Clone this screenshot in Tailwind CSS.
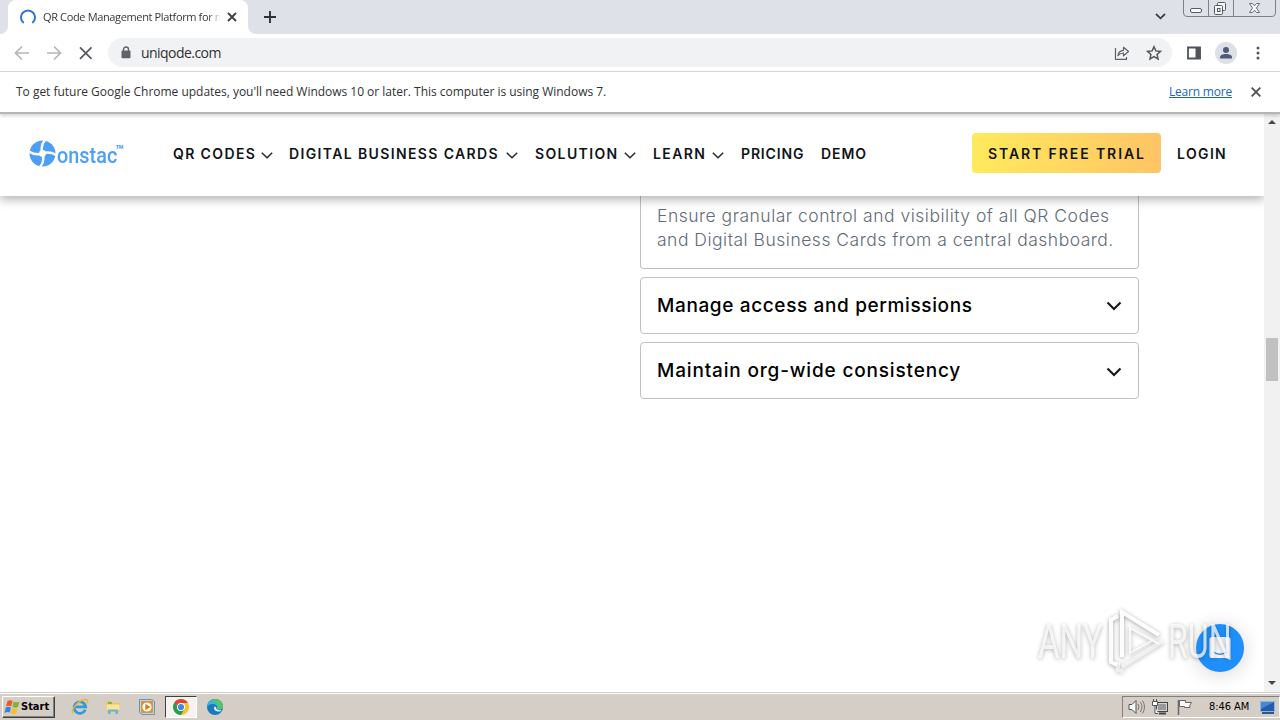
<!DOCTYPE html>
<html lang="en">
<head>
<meta charset="utf-8">
<title>QR Code Management Platform</title>
<script src="https://cdn.jsdelivr.net/npm/@tailwindcss/browser@4"></script>
</head>
<body class="w-[1280px] h-[720px] overflow-hidden flex flex-col bg-white font-['Open_Sans',sans-serif] text-[#303134]">
<!-- Tab strip -->
<div class="h-[34px] shrink-0 bg-[#dee1e8] flex items-start">
  <div class="w-2 h-[34px] bg-white shrink-0"><div class="size-full bg-[#dee1e8] rounded-br-lg"></div></div>
  <div class="w-[240px] h-[34px] bg-white rounded-t-lg flex items-center pl-3 shrink-0">
    <svg class="size-4 shrink-0" viewBox="0 0 16 16" fill="none"><path d="M3.700 14A7 7 0 1 1 12.300 14" stroke="#2f76d2" stroke-width="2"/></svg>
    <div class="ml-[7px] w-[178px] whitespace-nowrap text-[11px] tracking-[-0.36px] leading-4 bg-gradient-to-r from-[#303134] from-93% to-transparent bg-clip-text text-transparent">QR Code Management Platform for n</div>
    <svg class="size-[10px] ml-[6px] shrink-0" viewBox="0 0 10 10"><path d="M1 1l8 8M9 1L1 9" stroke="#3c4043" stroke-width="1.800"/></svg>
  </div>
  <div class="w-2 h-[34px] bg-white shrink-0"><div class="size-full bg-[#dee1e8] rounded-bl-lg"></div></div>
  <svg class="size-3 ml-2 mt-[11px]" viewBox="0 0 12 12"><path d="M6 0v12M0 6h12" stroke="#303134" stroke-width="1.900"/></svg>
  <svg class="w-[11px] h-[7px] ml-auto mt-[13px] mr-[17px]" viewBox="0 0 11 7" fill="none"><path d="M1 1l4.500 4.300L10 1" stroke="#3c4043" stroke-width="1.800"/></svg>
  <svg class="w-[93px] h-[17px] mr-1" viewBox="0 0 93 17" fill="none" stroke="#7d8087">
    <path d="M.5 0v13q0 3.500 3.500 3.500h85q3.500 0 3.500-3.500V0M25.500 0v16M50.500 0v16"/>
    <rect x="7.500" y="8.500" width="11" height="4" rx="1.500" fill="#f8f9fb" stroke="#5b5e65"/>
    <g fill="#f4f5f7" stroke="#565960"><rect x="34.500" y="2.500" width="8" height="8" rx="1"/><rect x="31.500" y="5.500" width="8" height="9" rx="1"/><rect x="34.500" y="8.500" width="2.500" height="3"/></g>
    <path d="M66.500 3.500h3l2 2.300 2-2.300h3l-3 4.500 3 4.500h-3l-2-2.300-2 2.300h-3l3-4.500z" fill="#f6f7f9" stroke="#6b6e75"/>
  </svg>
</div>
<!-- Toolbar -->
<div class="h-[38px] shrink-0 bg-white border-b border-[#d4d6da] flex items-center pl-[14px]">
  <svg class="w-[80px] h-4 shrink-0" viewBox="0 0 80 16" fill="none" stroke-width="1.700"><path d="M15 8H2M8 1.500L1.500 8 8 14.500M33 8h13M40 1.500L46.500 8 40 14.500" stroke="#b5b7ba"/><path d="M66 2.300l11.500 11.500M77.500 2.300L66 13.800" stroke="#55585c"/></svg>
  <div class="ml-[14px] w-[1064px] h-[29px] rounded-full bg-[#f0f2f4] flex items-center shrink-0">
    <svg class="w-[10px] h-[13px] ml-[13px]" viewBox="0 0 10 13"><path d="M2.500 6V3.500a2.500 2.500 0 0 1 5 0V6" fill="none" stroke="#5f6368" stroke-width="1.400"/><rect x="0.500" y="4.600" width="9" height="7.600" rx="1" fill="#5f6368"/></svg>
    <span class="ml-[10px] text-[14px] tracking-[-0.55px] leading-5">uniqode.com</span>
    <svg class="w-4 h-[14px] ml-auto" viewBox="0 0 16 14" fill="none" stroke="#5f6368" stroke-width="1.200"><path d="M1.500 2v11.300h11V11"/><path d="M4 9.500C4.500 6 6.500 4.500 9.500 4.300V1.300l5 4.200-5 4.300V7C7 7 5.500 7.800 4 9.500z" stroke-linejoin="round"/></svg>
    <svg class="size-4 ml-[16px] mr-[10px]" viewBox="0 0 16 16" fill="none"><path d="M8 1.700l1.900 4.200 4.600.5-3.400 3.100.9 4.500-4-2.300L4 14l.9-4.500L1.500 6.400l4.600-.5z" stroke="#55585c" stroke-width="1.500"/></svg>
  </div>
  <svg class="size-[14px] ml-[15px]" viewBox="0 0 14 14"><path d="M1 1.500h12v11H1z" fill="none" stroke="#505357" stroke-width="1.800"/><path d="M8.500 1h5v12h-5z" fill="#505357"/></svg>
  <svg class="size-[22px] ml-[14px]" viewBox="0 0 22 22"><circle cx="11" cy="11" r="11" fill="#dde0e5"/><circle cx="11" cy="8" r="3" fill="#4c5b7a"/><path d="M5 16.500v-1.200c0-2.200 3-3.300 6-3.300s6 1.100 6 3.300v1.200z" fill="#4c5b7a"/></svg>
  <svg class="w-1 h-[14px] ml-[19px]" viewBox="0 0 4 14" fill="#55585c"><circle cx="2" cy="2" r="1.500"/><circle cx="2" cy="7" r="1.500"/><circle cx="2" cy="12" r="1.500"/></svg>
</div>
<!-- Update notice -->
<div class="h-[42px] shrink-0 relative z-20 bg-white border-b-2 border-[#b5b5b5] shadow-[0_2px_3px_rgba(0,0,0,0.16)] flex items-center pl-4 pr-[19px] text-[12px] tracking-[-0.02px] leading-4">
  <span class="whitespace-nowrap">To get future Google Chrome updates, you'll need Windows 10 or later. This computer is using Windows 7.</span>
  <span class="ml-auto text-[#1f66b5] underline whitespace-nowrap tracking-[-0.2px]">Learn more</span>
  <svg class="size-[10px] ml-[19px]" viewBox="0 0 10 10"><path d="M.7.700l8.600 8.600M9.300.700L.7 9.300" stroke="#505357" stroke-width="1.900"/></svg>
</div>
<!-- Page viewport -->
<div class="flex h-[578px] shrink-0">
  <main class="w-[1264px] h-full relative flex flex-col overflow-hidden font-[Inter,sans-serif]">
    <header class="h-[82px] shrink-0 bg-white shadow-[0_3px_10px_rgba(0,0,0,0.33)] z-10 flex items-center pl-[29px] pb-[3px] text-[14px] font-semibold text-[#101418] tracking-[1.370px] whitespace-nowrap">
      <div class="w-[144px] h-[28px] flex items-start text-[#4d9ff5]">
        <svg class="size-[27px] shrink-0" viewBox="0 0 27 27"><circle cx="13.500" cy="13.500" r="13" fill="#4d9ff5"/><path d="M16 0C12.500 4 12 9 13.500 13.500S14.500 23 11 27M0 11.500c4 2.500 9 3.500 13.500 2S23 12.500 27 15" stroke="#fff" stroke-width="2.400" fill="none"/><circle cx="13.500" cy="13.500" r="3.400" fill="#fff"/></svg>
        <span class="w-[60px] pl-px text-[22px] leading-[28px] tracking-[0.1px] font-medium font-['Roboto',sans-serif] origin-left scale-x-[.9] mt-[2px]">onstac</span>
        <span class="text-[14px] leading-[12px] tracking-normal mt-[4px] -ml-[1px] font-bold font-['Roboto',sans-serif]">™</span>
      </div>
      <nav class="flex items-center">
        <div class="w-[116px] flex items-center justify-between pr-[16px]"><span>QR CODES</span><svg class="w-3 h-[7px] mt-[3px]" viewBox="0 0 12 7" fill="none"><path d="M.8.800L6 5.800 11.200.800" stroke="#25282c" stroke-width="1.500"/></svg></div>
        <div class="w-[246px] flex items-center justify-between pr-[17px]"><span>DIGITAL BUSINESS CARDS</span><svg class="w-3 h-[7px] mt-[3px]" viewBox="0 0 12 7" fill="none"><path d="M.8.800L6 5.800 11.200.800" stroke="#25282c" stroke-width="1.500"/></svg></div>
        <div class="w-[118px] flex items-center justify-between pr-[17px]"><span>SOLUTION</span><svg class="w-3 h-[7px] mt-[3px]" viewBox="0 0 12 7" fill="none"><path d="M.8.800L6 5.800 11.200.800" stroke="#25282c" stroke-width="1.500"/></svg></div>
        <div class="w-[88px] flex items-center justify-between pr-[17px]"><span>LEARN</span><svg class="w-3 h-[7px] mt-[3px]" viewBox="0 0 12 7" fill="none"><path d="M.8.800L6 5.800 11.200.800" stroke="#25282c" stroke-width="1.500"/></svg></div>
        <span class="w-[80px] tracking-[.850px]">PRICING</span><span class="tracking-[.950px]">DEMO</span>
      </nav>
      <div class="ml-auto w-[189px] h-10 -mt-px rounded bg-gradient-to-r from-[#ffea5c] to-[#ffc465] flex items-center pl-4 tracking-[1.900px]">START FREE TRIAL</div>
      <span class="ml-4 w-[87px]">LOGIN</span>
    </header>
    <section class="ml-[640px] w-[499px] flex flex-col gap-2">
      <div class="h-[73px] border border-t-0 border-[#bfc1c4] rounded-b px-4 pt-2 text-[17.500px] tracking-[.5px] leading-6 font-light text-[#646b7a] whitespace-nowrap"><p>Ensure granular control and visibility of all QR Codes</p><p>and Digital Business Cards from a central dashboard.</p></div>
      <div class="h-[57px] border border-[#bfc1c4] rounded flex items-center justify-between px-4 text-[19px] font-medium text-black"><span class="mt-[2px] tracking-[.63px]">Manage access and permissions</span><svg class="w-4 h-[10px]" viewBox="0 0 16 10" fill="none"><path d="M1.500 1.500L8 8l6.500-6.500" stroke="#17191c" stroke-width="2.200"/></svg></div>
      <div class="h-[57px] border border-[#bfc1c4] rounded flex items-center justify-between px-4 text-[19px] font-medium text-black"><span class="mt-[2px] tracking-[.83px]">Maintain org-wide consistency</span><svg class="w-4 h-[10px] mt-[2px]" viewBox="0 0 16 10" fill="none"><path d="M1.500 1.500L8 8l6.500-6.500" stroke="#17191c" stroke-width="2.200"/></svg></div>
    </section>
    <!-- Chat launcher -->
    <div class="absolute left-[1196px] top-[510px] size-12 rounded-full bg-[#1f8ffb] shadow-[0_2px_20px_rgba(0,0,0,0.16)] flex items-center justify-center">
      <svg class="w-[22px] h-[25px]" viewBox="0 0 22 25"><path d="M3 1h16a2.500 2.500 0 0 1 2.500 2.500V24l-5-2H3a2.500 2.500 0 0 1-2.500-2.500v-16A2.500 2.500 0 0 1 3 1z" fill="#f4f8fc"/><path d="M4 16q7 4.500 14 0" fill="none" stroke="#3d8ed8" stroke-width="1.400"/></svg>
    </div>
    <!-- Watermark -->
    <div class="absolute left-[1038px] top-[492px] w-[195px] h-[68px] flex items-center text-white/75 font-['Roboto',sans-serif] text-[48px] leading-[68px] [filter:drop-shadow(0_1px_2px_rgba(0,0,0,0.4))]">
      <div class="w-[68px] pt-[3px]"><span class="inline-block origin-left scale-x-[.69]">ANY</span></div>
      <svg class="w-[62px] h-[66px] shrink-0" viewBox="0 0 62 66" fill="none" stroke="#fff"><path d="M12 9L5 13v42l6 3M16 50V5l37 23" stroke-width="4" stroke-opacity=".95"/><path d="M24 21v25l23-13zL53 37" stroke-width="2" stroke-opacity=".8"/><path d="M16 60l41-26M12 55v8l5 1" stroke-width="4" stroke-opacity=".6"/></svg>
      <div class="w-[64px] pt-[3px]"><span class="inline-block origin-left scale-x-[.67]">RUN</span></div>
    </div>
  </main>
  <!-- Scrollbar -->
  <div class="w-4 h-full bg-[#f1f1f1] flex flex-col items-center pt-[6px] pb-[7px]">
    <svg class="w-2 h-1" viewBox="0 0 8 4"><path d="M0 4l4-4 4 4z" fill="#484848"/></svg>
    <div class="w-3 h-[43px] mt-[214px] bg-[#c1c1c1]"></div>
    <svg class="w-2 h-1 mt-auto" viewBox="0 0 8 4"><path d="M0 0l4 4 4-4z" fill="#484848"/></svg>
  </div>
</div>
<!-- Taskbar -->
<div class="h-7 shrink-0 bg-[#d5cec6] border-t border-[#d5cec6] shadow-[inset_0_1px_0_#fff] flex items-center pl-[2px] font-['DejaVu_Sans_Condensed','DejaVu_Sans',sans-serif] text-black">
  <div class="w-[53px] h-[22px] bg-[#d5cec6] border border-t-white border-l-white border-r-[#404040] border-b-[#404040] shadow-[inset_-1px_-1px_0_#808080] flex items-center pl-[1px] text-[11px] font-bold">
    <svg class="w-[17px] h-4 shrink-0" viewBox="0 0 17 16"><path d="M3.500 2Q6 .5 8.500 2L7.300 7.300Q4.500 6 2 7.500z" fill="#e85b29"/><path d="M9.500 2.500q3 1.500 6 0L14 8q-2.500 1.500-5.500 0z" fill="#79b837"/><path d="M1.800 8.500Q4.500 7 7 8.500L5.800 13.500Q3 12.500.5 14z" fill="#3d83d3"/><path d="M8.200 9.200q2.800 1.300 5.500 0l-1.400 5.300q-2.600 1.300-5.500 0z" fill="#f7bf25"/></svg>
    <span class="mt-px">Start</span>
  </div>
  <svg class="size-[18px] ml-[16px]" viewBox="0 0 18 18" fill="none"><path d="M14.300 11.800A5.800 5.800 0 1 1 14.700 8.900H4.500" stroke="#329ad8" stroke-width="2.700"/><path d="M2 15.500C-1 12 10-1 16 2c1.200.8.600 2.500.2 3.200" stroke="#e8b63a" stroke-width="1.400"/></svg>
  <svg class="size-4 ml-[16px] mt-px" viewBox="0 0 16 16"><path d="M1 2h5l1 2h8v9H1z" fill="#e7c65c"/><path d="M3 3h4v2H3z" fill="#77b957"/><path d="M1.500 5.500h13v6h-13z" fill="#f7e59b"/><path d="M3 15v-4.500h10V15h-2.500v-2.500h-5V15z" fill="#65b5df"/></svg>
  <svg class="size-4 ml-[18px]" viewBox="0 0 16 16"><path d="M.5.500h12l3 2v13H3l-2.500-2z" fill="#b9d8ed" stroke="#5b97c6"/><rect x="2" y="2" width="12" height="12" rx="1" fill="#ed8c23"/><circle cx="8" cy="8" r="4.600" fill="#fff"/><path d="M6.300 4.800v6.400L11.500 8z" fill="#e17817"/></svg>
  <div class="w-8 h-[22px] ml-[10px] bg-[#f5f3f0] border border-t-[#404040] border-l-[#404040] border-r-white border-b-white flex items-center justify-center">
    <svg class="size-4" viewBox="0 0 16 16"><path d="M8 8L1.070 4A8 8 0 0 1 14.930 4z" fill="#df4434"/><path d="M8 8L14.930 4A8 8 0 0 1 8 16z" fill="#f5c42b"/><path d="M8 8v8A8 8 0 0 1 1.070 4z" fill="#2a9e50"/><path d="M8 4h6.930L11.500 10z" fill="#f5c42b"/><path d="M1.070 4L4.540 10 8 8V4z" fill="#df4434"/><path d="M1.070 4L4.540 10 8 16 11.460 10z" fill="#2a9e50"/><circle cx="8" cy="8" r="4" fill="#fff"/><circle cx="8" cy="8" r="3.100" fill="#4286e9"/></svg>
  </div>
  <svg class="size-4 ml-[10px]" viewBox="0 0 16 16"><circle cx="8" cy="8" r="8" fill="#1878c0"/><path d="M.3 6.500C1.500 1.500 6-.8 10.500.5 15 2 17 6 15.500 9c-1 2-4.500 2-5.700.8C11.500 7 8.500 4.500 5.500 5 3 5.200 1.200 6 .3 7.500z" fill="#39b9d5"/><path d="M8 0c5 0 8.300 4 7.900 7.500C15 11 11 11 9.800 9.800 12 6 9 2 4 2.500 5 .8 6.500 0 8 0z" fill="#52c56c"/><path d="M7.500 7.500c-1.500 2.500.5 5.500 5.500 5l1.500-1.500c-3 .5-6-.5-5.500-3z" fill="#e5eef5"/></svg>
  <div class="ml-auto w-[158px] h-[22px] mt-px border border-t-[#808080] border-l-[#808080] border-r-white border-b-white flex items-center pl-[5px]">
    <svg class="w-[18px] h-4" viewBox="0 0 18 16" fill="none" stroke="#777"><path d="M1 5.500h3l4-4v13l-4-4H1z" fill="#f8f8f8" stroke="#555"/><path d="M10 5q2 3 0 6M12.300 3q3.400 5 0 10M14.500 1.500q4 6.500 0 13"/></svg>
    <svg class="w-[17px] h-4 ml-[6px]" viewBox="0 0 17 16"><rect x="4.500" y="3.500" width="11" height="9" fill="#d5d5d5" stroke="#444"/><path d="M6 5h8v6H6z" fill="#999"/><path d="M.5 2.500h5v4h-5zM1.500 0v3M4.500 0v3M3 6.500v8h3" fill="#fff" stroke="#555"/><path d="M7 14.500h7" stroke="#444" stroke-width="2"/></svg>
    <svg class="w-4 h-4 ml-[8px]" viewBox="0 0 16 16"><path d="M1.500 1v15" stroke="#666" stroke-width="1.500"/><path d="M2.500 1.500h6v2h6l-1.800 3 .3 2H7.500v-1h-5z" fill="#f9f9f9" stroke="#666"/></svg>
    <span class="ml-[16px] w-[41px] text-[11px] tracking-[-0.05px] whitespace-nowrap">8:46 AM</span>
    <svg class="w-[15px] h-[13px] ml-[10px] shrink-0" viewBox="0 0 15 13"><rect x=".5" y=".5" width="14" height="10" fill="#235caf" stroke="#91b5da"/><path d="M1 1h13L1 8z" fill="#4588d3"/><path d="M2 12h12" stroke="#30588d" stroke-width="2"/></svg>
  </div>
</div>
</body>
</html>
